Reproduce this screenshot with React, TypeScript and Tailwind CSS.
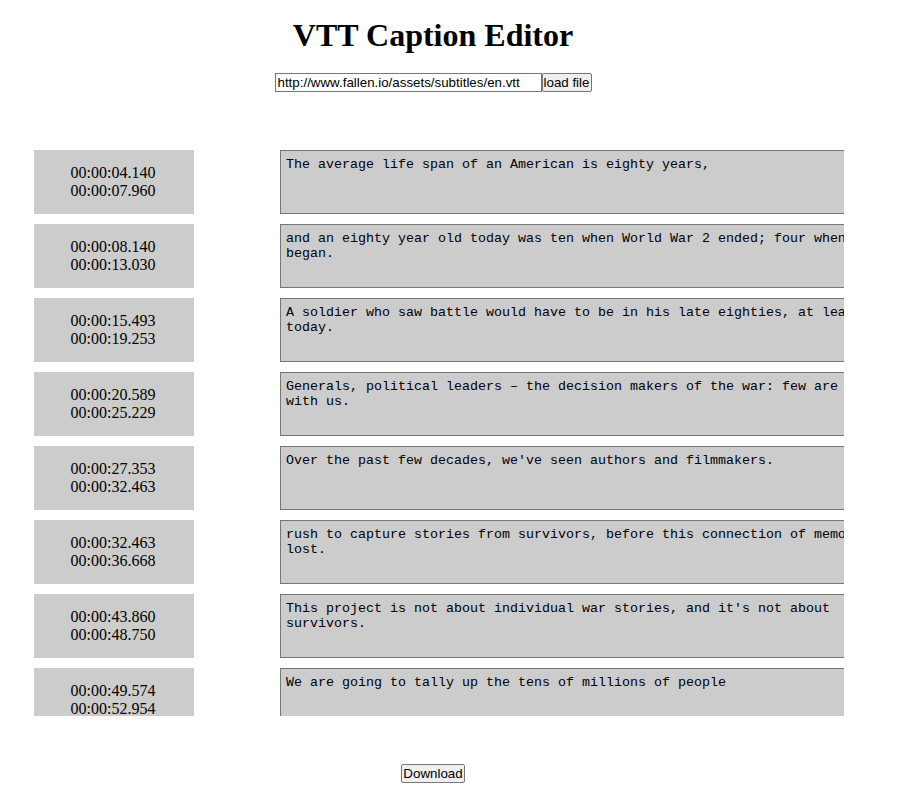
const captions = [
  { start: '00:00:04.140', end: '00:00:07.960', text: 'The average life span of an American is eighty years,' },
  { start: '00:00:08.140', end: '00:00:13.030', text: 'and an eighty year old today was ten when World War 2 ended; four when it began.' },
  { start: '00:00:15.493', end: '00:00:19.253', text: 'A soldier who saw battle would have to be in his late eighties, at least, today.' },
  { start: '00:00:20.589', end: '00:00:25.229', text: 'Generals, political leaders \u2013 the decision makers of the war: few are still with us.' },
  { start: '00:00:27.353', end: '00:00:32.463', text: "Over the past few decades, we've seen authors and filmmakers." },
  { start: '00:00:32.463', end: '00:00:36.668', text: 'rush to capture stories from survivors, before this connection of memory is lost.' },
  { start: '00:00:43.860', end: '00:00:48.750', text: "This project is not about individual war stories, and it's not about survivors." },
  { start: '00:00:49.574', end: '00:00:52.954', text: 'We are going to tally up the tens of millions of people' },
];

export default function App() {
  return (
    <div className="w-[898px] min-h-[800px] bg-white text-black">
      <div className="w-[866px] text-center pt-[17px]">
        <h1 className="font-['Liberation_Serif',serif] font-bold text-[32px] leading-[37px]">VTT Caption Editor</h1>
        <div className="mt-[19px] flex justify-center font-['Liberation_Sans',Arial,sans-serif] text-[13.33px]">
          <input
            className="w-[267px] h-[19px] border border-[#767676] px-[2px] bg-white outline-none"
            defaultValue="http://www.fallen.io/assets/subtitles/en.vtt"
          />
          <button className="w-[50px] h-[19px] border border-[#767676] rounded-[2px] bg-[#efefef] leading-[15px]">
            load file
          </button>
        </div>
      </div>

      <div className="ml-[34px] mt-[58px] w-[810px] h-[566px] overflow-hidden">
        <div className="flex flex-col gap-[10px]">
          {captions.map((c, i) => (
            <div key={i} className="flex items-start gap-[86px] shrink-0">
              <div className="w-[160px] h-[64px] shrink-0 bg-[#cccccc] flex flex-col items-center justify-center pr-[2px] font-['Liberation_Serif',serif] text-[16px] leading-[18px]">
                <span>{c.start}</span>
                <span>{c.end}</span>
              </div>
              <textarea
                className="w-[629px] h-[64px] shrink-0 bg-[#cccccc] border border-[#767676] pl-[5px] pr-[2px] pt-[6px] pb-[2px] font-['Liberation_Mono','Courier_New',monospace] text-[13.33px] leading-[15px] resize-none overflow-hidden outline-none"
                defaultValue={c.text}
              />
            </div>
          ))}
        </div>
      </div>

      <div className="w-[866px] flex justify-center mt-[48px] font-['Liberation_Sans',Arial,sans-serif] text-[13.33px]">
        <button className="h-[19px] px-[1px] border border-[#767676] rounded-[2px] bg-[#efefef] leading-[15px]">
          Download
        </button>
      </div>
    </div>
  );
}
